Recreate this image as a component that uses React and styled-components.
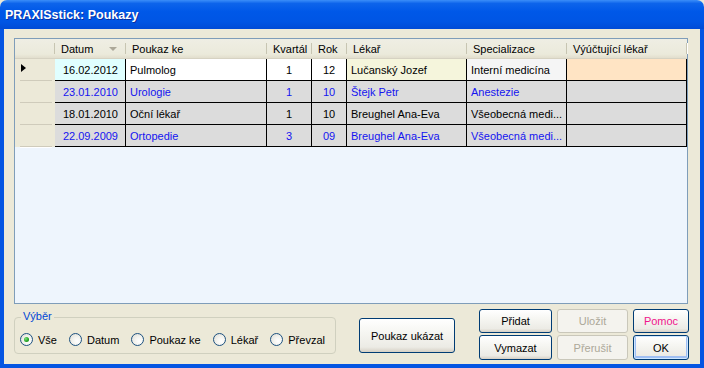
import React from 'react';
import styled, { createGlobalStyle, css } from 'styled-components';

const GlobalStyle = createGlobalStyle`
  html, body {
    margin: 0;
    padding: 0;
    background: #ECE9D8;
  }
  * {
    box-sizing: border-box;
  }
`;

const columns = [
  { key: 'sel', title: '', width: 40 },
  { key: 'datum', title: 'Datum', width: 71, align: 'right', sort: true },
  { key: 'poukaz', title: 'Poukaz ke', width: 141 },
  { key: 'kvartal', title: 'Kvartál', width: 45, align: 'center' },
  { key: 'rok', title: 'Rok', width: 35, align: 'center' },
  { key: 'lekar', title: 'Lékař', width: 120 },
  { key: 'spec', title: 'Specializace', width: 100 },
  { key: 'vyuct', title: 'Výúčtující lékař', width: 120 },
];

const rows = [
  {
    current: true,
    datum: '16.02.2012',
    poukaz: 'Pulmolog',
    kvartal: '1',
    rok: '12',
    lekar: 'Lučanský Jozef',
    spec: 'Interní medicína',
    vyuct: '',
  },
  { blue: true, datum: '23.01.2010', poukaz: 'Urologie', kvartal: '1', rok: '10', lekar: 'Štejk Petr', spec: 'Anestezie', vyuct: '' },
  { datum: '18.01.2010', poukaz: 'Oční lékař', kvartal: '1', rok: '10', lekar: 'Breughel Ana-Eva', spec: 'Všeobecná medi...', vyuct: '' },
  { blue: true, datum: '22.09.2009', poukaz: 'Ortopedie', kvartal: '3', rok: '09', lekar: 'Breughel Ana-Eva', spec: 'Všeobecná medi...', vyuct: '' },
];

// colours of the current row, per column
const currentBg = {
  datum: '#E0FFFF',
  poukaz: '#FFFFFF',
  kvartal: '#FFFFFF',
  rok: '#FFFFFF',
  lekar: '#F5F5DC',
  spec: '#F5F5F5',
  vyuct: '#FFE4C4',
};

const Window = styled.div`
  width: 704px;
  height: 368px;
  display: flex;
  flex-direction: column;
  font-family: "Liberation Sans", Arial, sans-serif;
  font-size: 11px;
`;

const TitleBar = styled.div`
  height: 29px;
  display: flex;
  align-items: center;
  padding: 1px 0 0 5px;
  border-radius: 7px 7px 0 0;
  background: linear-gradient(
    to bottom,
    #3B8EF9 0%,
    #0D64EB 12%,
    #0058E8 40%,
    #0055E4 75%,
    #004BD6 100%
  );
  color: #fff;
  font-weight: bold;
  font-size: 12.5px;
  text-shadow: 1px 1px 0 #0B2FA0;
`;

const Body = styled.div`
  flex: 1;
  display: flex;
  flex-direction: column;
  background: #ECE9D8;
  border: 4px solid #0555E2;
  border-top: 0;
  padding: 9px 12px 4px 10px;
`;

const Grid = styled.div`
  height: 266px;
  border: 1px solid #7F9DB9;
  background: #EEF5FD;
  display: grid;
  grid-template-columns: ${(p) => p.$cols};
  grid-template-rows: 20px repeat(4, 22px);
  align-content: start;
`;

const HeaderCell = styled.div`
  display: flex;
  align-items: center;
  padding: 0 6px;
  position: relative;
  background: linear-gradient(to bottom, #EFEEE4 0%, #EBEADB 80%, #E2DECD 100%);
  border-bottom: 1px solid #D6D2C2;
  color: #000;
  white-space: nowrap;

  &::after {
    content: '';
    position: absolute;
    right: 0;
    top: 4px;
    bottom: 4px;
    width: 1px;
    background: #C7C5B2;
    box-shadow: 1px 0 0 #fff;
  }
`;

const SortArrow = styled.span`
  margin-left: auto;
  margin-right: 3px;
  width: 0;
  height: 0;
  border-left: 4px solid transparent;
  border-right: 4px solid transparent;
  border-top: 4px solid #ACA899;
`;

const SelectorCell = styled.div`
  display: flex;
  padding: 0 3px 0 5px;
  background: #ECE9D8;
`;

const SelectorInner = styled.div`
  flex: 1;
  display: flex;
  align-items: center;
  padding-left: 1px;
  border-bottom: 1px solid #CFCBBB;
  box-shadow: 0 1px 0 #fff;
`;

const RowArrow = styled.span`
  width: 0;
  height: 0;
  border-top: 4px solid transparent;
  border-bottom: 4px solid transparent;
  border-left: 5px solid #000;
  margin-bottom: 3px;
`;

const Cell = styled.div`
  display: flex;
  align-items: center;
  padding: 0 ${(p) => (p.$align === 'right' ? '7px' : '4px')} 0 4px;
  justify-content: ${(p) =>
    p.$align === 'right' ? 'flex-end' : p.$align === 'center' ? 'center' : 'flex-start'};
  background: ${(p) => p.$bg};
  color: ${(p) => (p.$blue ? '#1414F0' : '#000')};
  border-right: 1px solid #000;
  border-bottom: 1px solid #000;
  white-space: nowrap;
  overflow: hidden;
`;

const BottomBar = styled.div`
  flex: 1;
  display: flex;
  align-items: flex-start;
`;

const GroupBox = styled.div`
  position: relative;
  flex-shrink: 0;
  margin-top: 13px;
  width: 322px;
  height: 37px;
  border: 1px solid #D0D0BF;
  border-radius: 4px;
  display: flex;
  align-items: center;
  padding: 8px 0 0 5px;
`;

const GroupLabel = styled.span`
  position: absolute;
  top: -8px;
  left: 6px;
  padding: 0 2px;
  background: #ECE9D8;
  color: #0046D5;
`;

const RadioItem = styled.label`
  display: flex;
  flex-shrink: 0;
  align-items: center;
  gap: 5px;
  margin-right: 12px;
  color: #000;
  white-space: nowrap;

  &:last-child {
    margin-right: 0;
  }
`;

const RadioCircle = styled.span`
  width: 13px;
  height: 13px;
  border-radius: 50%;
  border: 1px solid #1C5180;
  background: radial-gradient(circle at 65% 65%, #FFFFFF 0%, #F4F4F0 40%, #DCDAD0 100%);
  display: flex;
  align-items: center;
  justify-content: center;

  ${(p) =>
    p.$checked &&
    css`
      &::after {
        content: '';
        width: 5px;
        height: 5px;
        border-radius: 50%;
        background: radial-gradient(circle at 35% 35%, #7BE17B 0%, #21A121 60%, #157A15 100%);
      }
    `}
`;

const Button = styled.button`
  font-family: "Liberation Sans", Arial, sans-serif;
  font-size: 11px;
  padding: 0;
  border: 1px solid ${(p) => (p.$disabled ? '#C9C7BA' : '#003C74')};
  border-radius: 3px;
  background: ${(p) =>
    p.$disabled
      ? '#F4F3EE'
      : 'linear-gradient(to bottom, #FFFFFF 0%, #F6F6F2 40%, #ECEBE5 85%, #D6D0C5 100%)'};
  color: ${(p) => (p.$disabled ? '#ACA899' : p.$color || '#000')};
  ${(p) =>
    p.$default &&
    css`
      box-shadow: inset 0 0 0 1px #CEE7FF, inset 0 -1px 0 2px #A0BFF3;
    `}
`;

const BigButton = styled(Button)`
  flex-shrink: 0;
  margin: 14px 0 0 23px;
  width: 96px;
  height: 35px;
`;

const ButtonGrid = styled.div`
  flex-shrink: 0;
  margin: 5px 0 0 24px;
  display: grid;
  grid-template-columns: 73px 71px 56px;
  grid-template-rows: 24px 25px;
  column-gap: 5px;
  row-gap: 2px;
`;

const radios = ['Vše', 'Datum', 'Poukaz ke', 'Lékař', 'Převzal'];

export default function App() {
  const cols = columns.map((c) => `${c.width}px`).join(' ');

  return (
    <>
      <GlobalStyle />
      <Window>
        <TitleBar>PRAXISstick: Poukazy</TitleBar>
        <Body>
          <Grid $cols={cols}>
            {columns.map((c) => (
              <HeaderCell key={c.key}>
                {c.title}
                {c.sort && <SortArrow />}
              </HeaderCell>
            ))}
            {rows.map((r, i) => (
              <React.Fragment key={i}>
                <SelectorCell>
                  <SelectorInner>{r.current && <RowArrow />}</SelectorInner>
                </SelectorCell>
                {columns.slice(1).map((c) => (
                  <Cell
                    key={c.key}
                    $align={c.align}
                    $blue={r.blue}
                    $bg={r.current ? currentBg[c.key] : '#DCDCDC'}
                  >
                    {r[c.key]}
                  </Cell>
                ))}
              </React.Fragment>
            ))}
          </Grid>

          <BottomBar>
            <GroupBox>
              <GroupLabel>Výběr</GroupLabel>
              {radios.map((label, i) => (
                <RadioItem key={label}>
                  <RadioCircle $checked={i === 0} />
                  {label}
                </RadioItem>
              ))}
            </GroupBox>

            <BigButton>Poukaz ukázat</BigButton>

            <ButtonGrid>
              <Button>Přidat</Button>
              <Button $disabled>Uložit</Button>
              <Button $color="#F0148C">Pomoc</Button>
              <Button>Vymazat</Button>
              <Button $disabled>Přerušit</Button>
              <Button $default>OK</Button>
            </ButtonGrid>
          </BottomBar>
        </Body>
      </Window>
    </>
  );
}
